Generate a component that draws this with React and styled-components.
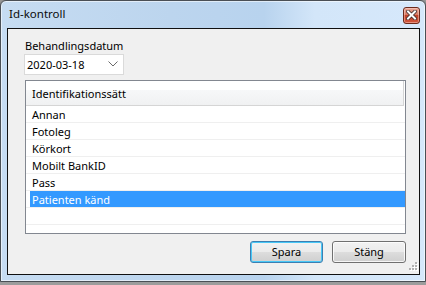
import React from "react";
import styled, { createGlobalStyle } from "styled-components";

const Global = createGlobalStyle`
  html, body { margin: 0; padding: 0; }
  body {
    background: #9c9c9c;
    font-family: "Noto Sans", "Segoe UI", sans-serif;
    font-size: 11px;
    color: #000;
  }
`;

const Frame = styled.div`
  box-sizing: border-box;
  width: 426px;
  height: 282px;
  border: 1px solid #4a4f55;
  border-radius: 6px 6px 0 0;
  background: linear-gradient(90deg, #c6dcf2 0%, #bcd5ee 40%, #b8d3ee 62%, #d3e6f9 74%, #d6e8fb 100%);
  box-shadow: inset 0 0 0 1px rgba(255, 255, 255, 0.55), 0 1px 3px rgba(0, 0, 0, 0.6);
  display: flex;
  flex-direction: column;
  padding: 0 5px 6px 6px;
`;

const TitleBar = styled.div`
  height: 26px;
  display: flex;
  align-items: center;
  justify-content: space-between;
  padding: 0 0 1px 2px;
`;

const Title = styled.span`
  font-size: 11.5px;
  color: #0b0b0b;
`;

const CloseButton = styled.div`
  box-sizing: border-box;
  width: 17px;
  height: 17px;
  margin-top: 3px;
  border: 1px solid #6b2a1c;
  border-radius: 3px;
  background: linear-gradient(#e9a898 0%, #d87a64 45%, #c2432a 50%, #d0553c 100%);
  box-shadow: inset 0 0 0 1px rgba(255, 220, 210, 0.45);
  display: flex;
  align-items: center;
  justify-content: center;
`;

const Client = styled.div`
  position: relative;
  box-sizing: border-box;
  height: 248px;
  border: 1px solid #101010;
  background: #f0f0f0;
  display: flex;
  flex-direction: column;
  padding: 9px 13px 0 16px;
`;

const Label = styled.div`
  line-height: 16px;
  margin-left: 1px;
`;

const Combo = styled.div`
  box-sizing: border-box;
  width: 100px;
  height: 21px;
  background: #fff;
  border: 1px solid #dadada;
  display: flex;
  align-items: center;
  justify-content: space-between;
  padding: 0 5px 0 2px;
`;

const Panel = styled.div`
  box-sizing: border-box;
  margin-top: 5px;
  margin-left: 1px;
  height: 154px;
  border: 1px solid #828790;
  background: #fff;
  display: flex;
  flex-direction: column;
`;

const Header = styled.div`
  box-sizing: border-box;
  height: 25px;
  margin-right: 1px;
  border-bottom: 1px solid #d5d5d5;
  border-right: 1px solid #d5d5d5;
  background: linear-gradient(#ffffff 0%, #ffffff 37%, #f7f8f9 37%, #f0f1f2 100%);
  display: flex;
  align-items: center;
  padding: 1px 0 0 6px;
`;

const Row = styled.div`
  box-sizing: border-box;
  height: 17px;
  border-bottom: 1px solid #efefef;
  display: flex;
`;

const Cell = styled.div`
  flex: 1;
  margin-left: 4px;
  padding: 1px 0 0 2px;
  line-height: 15px;
  background: ${(p) => (p.$selected ? "#3399ff" : "transparent")};
  color: ${(p) => (p.$selected ? "#fff" : "#000")};
`;

const ButtonRow = styled.div`
  margin-top: 7px;
  display: flex;
  justify-content: flex-end;
  gap: 9px;
`;

const Button = styled.div`
  box-sizing: border-box;
  width: ${(p) => p.$w}px;
  height: 22px;
  border-radius: 3px;
  border: 1px solid ${(p) => (p.$default ? "#3c7fb1" : "#707070")};
  background: linear-gradient(#f2f2f2 0%, #ebebeb 50%, #dddddd 50%, #cfcfcf 100%);
  box-shadow: ${(p) =>
    p.$default ? "inset 0 0 0 1px #48c8f7" : "inset 0 0 0 1px rgba(255,255,255,0.8)"};
  display: flex;
  align-items: center;
  justify-content: center;
  padding-bottom: 1px;
`;

const Grip = styled.svg`
  position: absolute;
  right: 1px;
  bottom: 1px;
`;

const items = ["Annan", "Fotoleg", "Körkort", "Mobilt BankID", "Pass", "Patienten känd", ""];

export default function App() {
  return (
    <>
      <Global />
      <Frame>
        <TitleBar>
          <Title>Id-kontroll</Title>
          <CloseButton>
            <svg width="11" height="10" viewBox="0 0 11 10">
              <path
                d="M2 1.5 L9 8.5 M9 1.5 L2 8.5"
                stroke="#3b2a2a"
                strokeWidth="3.6"
                strokeLinecap="square"
                fill="none"
              />
              <path
                d="M2 1.5 L9 8.5 M9 1.5 L2 8.5"
                stroke="#ffffff"
                strokeWidth="2"
                strokeLinecap="square"
                fill="none"
              />
            </svg>
          </CloseButton>
        </TitleBar>
        <Client>
          <Label>Behandlingsdatum</Label>
          <Combo>
            <span>2020-03-18</span>
            <svg width="10" height="6" viewBox="0 0 10 6">
              <polyline points="0.5,0.5 5,5 9.5,0.5" stroke="#6a6a6a" strokeWidth="1" fill="none" />
            </svg>
          </Combo>
          <Panel>
            <Header>Identifikationssätt</Header>
            {items.map((t, i) => (
              <Row key={i}>
                <Cell $selected={t === "Patienten känd"}>{t}</Cell>
              </Row>
            ))}
          </Panel>
          <ButtonRow>
            <Button $w={73} $default>Spara</Button>
            <Button $w={74}>Stäng</Button>
          </ButtonRow>
          <Grip width="11" height="11" viewBox="0 0 11 11">
            {[
              [8, 0],
              [5, 3],
              [8, 3],
              [2, 6],
              [5, 6],
              [8, 6],
            ].map(([x, y], i) => (
              <g key={i}>
                <rect x={x + 1} y={y + 1} width="2" height="2" fill="#ffffff" />
                <rect x={x} y={y} width="2" height="2" fill="#b0b0b0" />
              </g>
            ))}
          </Grip>
        </Client>
      </Frame>
    </>
  );
}
